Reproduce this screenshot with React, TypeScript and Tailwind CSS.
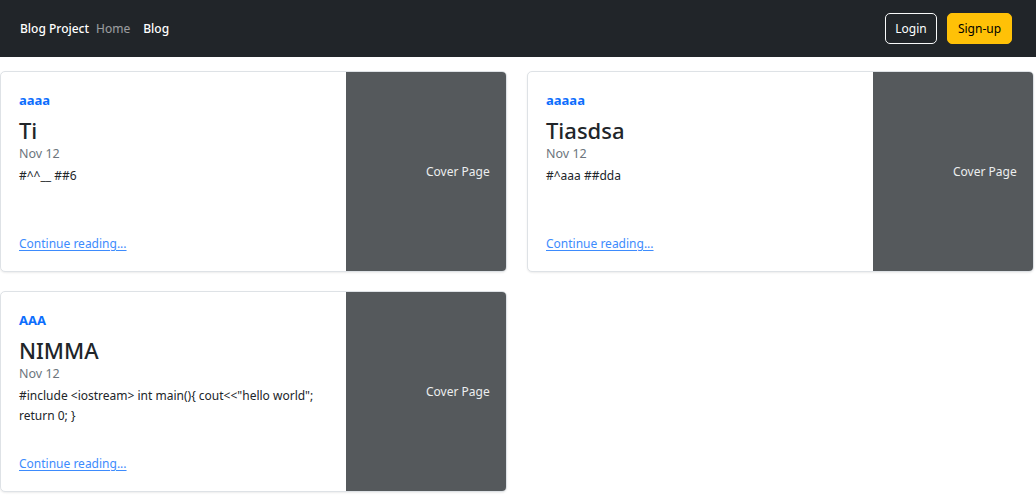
import React from "react";

type Post = {
  category: string;
  title: string;
  date: string;
  excerpt: string;
};

const posts: Post[] = [
  { category: "aaaa", title: "Ti", date: "Nov 12", excerpt: "#^^__ ##6" },
  { category: "aaaaa", title: "Tiasdsa", date: "Nov 12", excerpt: "#^aaa ##dda" },
  {
    category: "AAA",
    title: "NIMMA",
    date: "Nov 12",
    excerpt: '#include <iostream> int main(){ cout<<"hello world"; return 0; }',
  },
];

function PostCard({ post }: { post: Post }) {
  return (
    <div className="flex h-[201px] overflow-hidden rounded-[5px] border border-[#dee2e6] bg-white shadow-[0_1px_2px_rgba(0,0,0,0.075)]">
      <div className="flex flex-1 flex-col pl-[18px] pr-[17px] pt-[20px] pb-[18px]">
        <strong className="text-[13px] leading-[16px] font-bold text-[#0d6efd]">{post.category}</strong>
        <h3 className="mt-[8px] text-[22px] leading-[28px] font-medium text-[#212529]">{post.title}</h3>
        <div className="text-[12.5px] leading-[19px] text-[#6c757d]">{post.date}</div>
        <p className="mt-[3px] text-[12px] leading-[20px] text-[#212529] whitespace-pre-wrap">{post.excerpt}</p>
        <a href="#" className="mt-auto text-[12px] leading-[18px] text-[#3d8bfd] underline underline-offset-2">
          Continue reading...
        </a>
      </div>
      <div className="flex w-[160px] items-center bg-[#55595c] pl-[80px]">
        <span className="text-[12px] text-[#eceeef]">Cover Page</span>
      </div>
    </div>
  );
}

export default function App() {
  return (
    <div className="min-h-screen bg-white font-['Segoe_UI','Noto_Sans',sans-serif]">
      <nav className="flex h-[57px] items-center bg-[#212529] pl-[20px] pr-[24px]">
        <a href="#" className="text-[12px] font-medium text-white">Blog Project</a>
        <a href="#" className="ml-[7px] text-[12px] text-white/55">Home</a>
        <a href="#" className="ml-[13px] text-[12px] font-medium text-white">Blog</a>
        <div className="ml-auto flex items-center gap-[10px]">
          <button className="h-[31px] w-[52px] rounded-[5px] border border-[#f8f9fa] text-[12px] text-white">Login</button>
          <button className="h-[31px] w-[65px] rounded-[5px] border border-[#ffc107] bg-[#ffc107] text-[12px] text-black">Sign-up</button>
        </div>
      </nav>
      <main className="grid grid-cols-[507px_507px] gap-x-[20px] gap-y-[19px] pt-[14px]">
        {posts.map((p) => (
          <PostCard key={p.title} post={p} />
        ))}
      </main>
    </div>
  );
}
